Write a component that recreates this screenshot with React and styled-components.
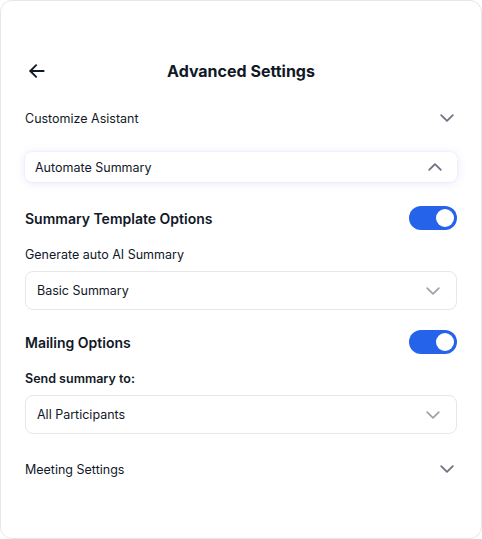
import React from 'react';
import styled, { createGlobalStyle } from 'styled-components';

const Global = createGlobalStyle`
  html, body { margin: 0; padding: 0; background: #ffffff; }
  body { font-family: Inter, "Noto Sans", sans-serif; color: #111827; }
`;

const Chevron = ({ up, light }) => (
  <svg width="20" height="20" viewBox="0 0 24 24" fill="none"
    stroke={light ? '#9ca3af' : '#6b7280'} strokeWidth="2.1" strokeLinecap="round" strokeLinejoin="round">
    <path d={up ? 'M5 15.5l7-7 7 7' : 'M5 8.5l7 7 7-7'} />
  </svg>
);

const Toggle = () => (
  <Switch>
    <Knob />
  </Switch>
);

export default function App() {
  return (
    <>
      <Global />
      <Card>
        <Header>
          <Back>
            <svg width="20" height="20" viewBox="0 0 24 24" fill="none" stroke="#111827" strokeWidth="2.2" strokeLinecap="round" strokeLinejoin="round">
              <path d="M20 12H4" />
              <path d="M11 5l-7 7 7 7" />
            </svg>
          </Back>
          <Title>Advanced Settings</Title>
        </Header>

        <Row $top={24}>
          <Label>Customize Asistant</Label>
          <Chevron />
        </Row>

        <ActiveRow>
          <Label>Automate Summary</Label>
          <Chevron up />
        </ActiveRow>

        <Section $top={24}>
          <Heading>Summary Template Options</Heading>
          <Toggle />
        </Section>

        <Caption>Generate auto AI Summary</Caption>
        <Select>
          <span>Basic Summary</span>
          <Chevron light />
        </Select>

        <Section $top={20}>
          <Heading>Mailing Options</Heading>
          <Toggle />
        </Section>

        <Caption $bold>Send summary to:</Caption>
        <Select>
          <span>All Participants</span>
          <Chevron light />
        </Select>

        <Row $top={25}>
          <Label>Meeting Settings</Label>
          <Chevron />
        </Row>
      </Card>
    </>
  );
}

const Card = styled.div`
  box-sizing: border-box;
  width: 482px;
  height: 539px;
  border: 1px solid #e5e7eb;
  border-radius: 12px;
  background: #ffffff;
  padding: 57px 24px 0 24px;
  display: flex;
  flex-direction: column;
`;

const Header = styled.div`
  position: relative;
  height: 26px;
  display: flex;
  align-items: center;
  justify-content: center;
`;

const Back = styled.div`
  position: absolute;
  left: 2px;
  top: 3px;
  display: flex;
`;

const Title = styled.h1`
  margin: 0;
  font-size: 16px;
  font-weight: 700;
  color: #111827;
`;

const Row = styled.div`
  margin-top: ${p => p.$top}px;
  display: flex;
  align-items: center;
  justify-content: space-between;
  height: 20px;
`;

const ActiveRow = styled.div`
  margin-top: 24px;
  height: 30px;
  box-sizing: border-box;
  display: flex;
  align-items: center;
  justify-content: space-between;
  padding: 0 12px 0 10px;
  border-radius: 7px;
  background: #ffffff;
  box-shadow: 0 1px 10px rgba(99, 102, 241, 0.16), 0 0 2px rgba(99, 102, 241, 0.12);
`;

const Label = styled.span`
  font-size: 12.5px;
  font-weight: 400;
  color: #111827;
`;

const Section = styled.div`
  margin-top: ${p => p.$top}px;
  display: flex;
  align-items: center;
  justify-content: space-between;
  height: 24px;
`;

const Heading = styled.h2`
  margin: 0;
  font-size: 14px;
  font-weight: 600;
  color: #111827;
`;

const Switch = styled.div`
  width: 48px;
  height: 24px;
  border-radius: 12px;
  background: #2563eb;
  display: flex;
  align-items: center;
  justify-content: flex-end;
  padding: 0 3px;
  box-sizing: border-box;
`;

const Knob = styled.div`
  width: 18px;
  height: 18px;
  border-radius: 50%;
  background: #ffffff;
`;

const Caption = styled.div`
  margin-top: 16px;
  font-size: 12.5px;
  font-weight: ${p => (p.$bold ? 600 : 400)};
  color: #111827;
  line-height: 18px;
`;

const Select = styled.div`
  margin-top: 7px;
  height: 39px;
  box-sizing: border-box;
  border: 1px solid #e5e7eb;
  border-radius: 8px;
  display: flex;
  align-items: center;
  justify-content: space-between;
  padding: 0 13px 0 11px;
  font-size: 12.5px;
  color: #111827;
`;
